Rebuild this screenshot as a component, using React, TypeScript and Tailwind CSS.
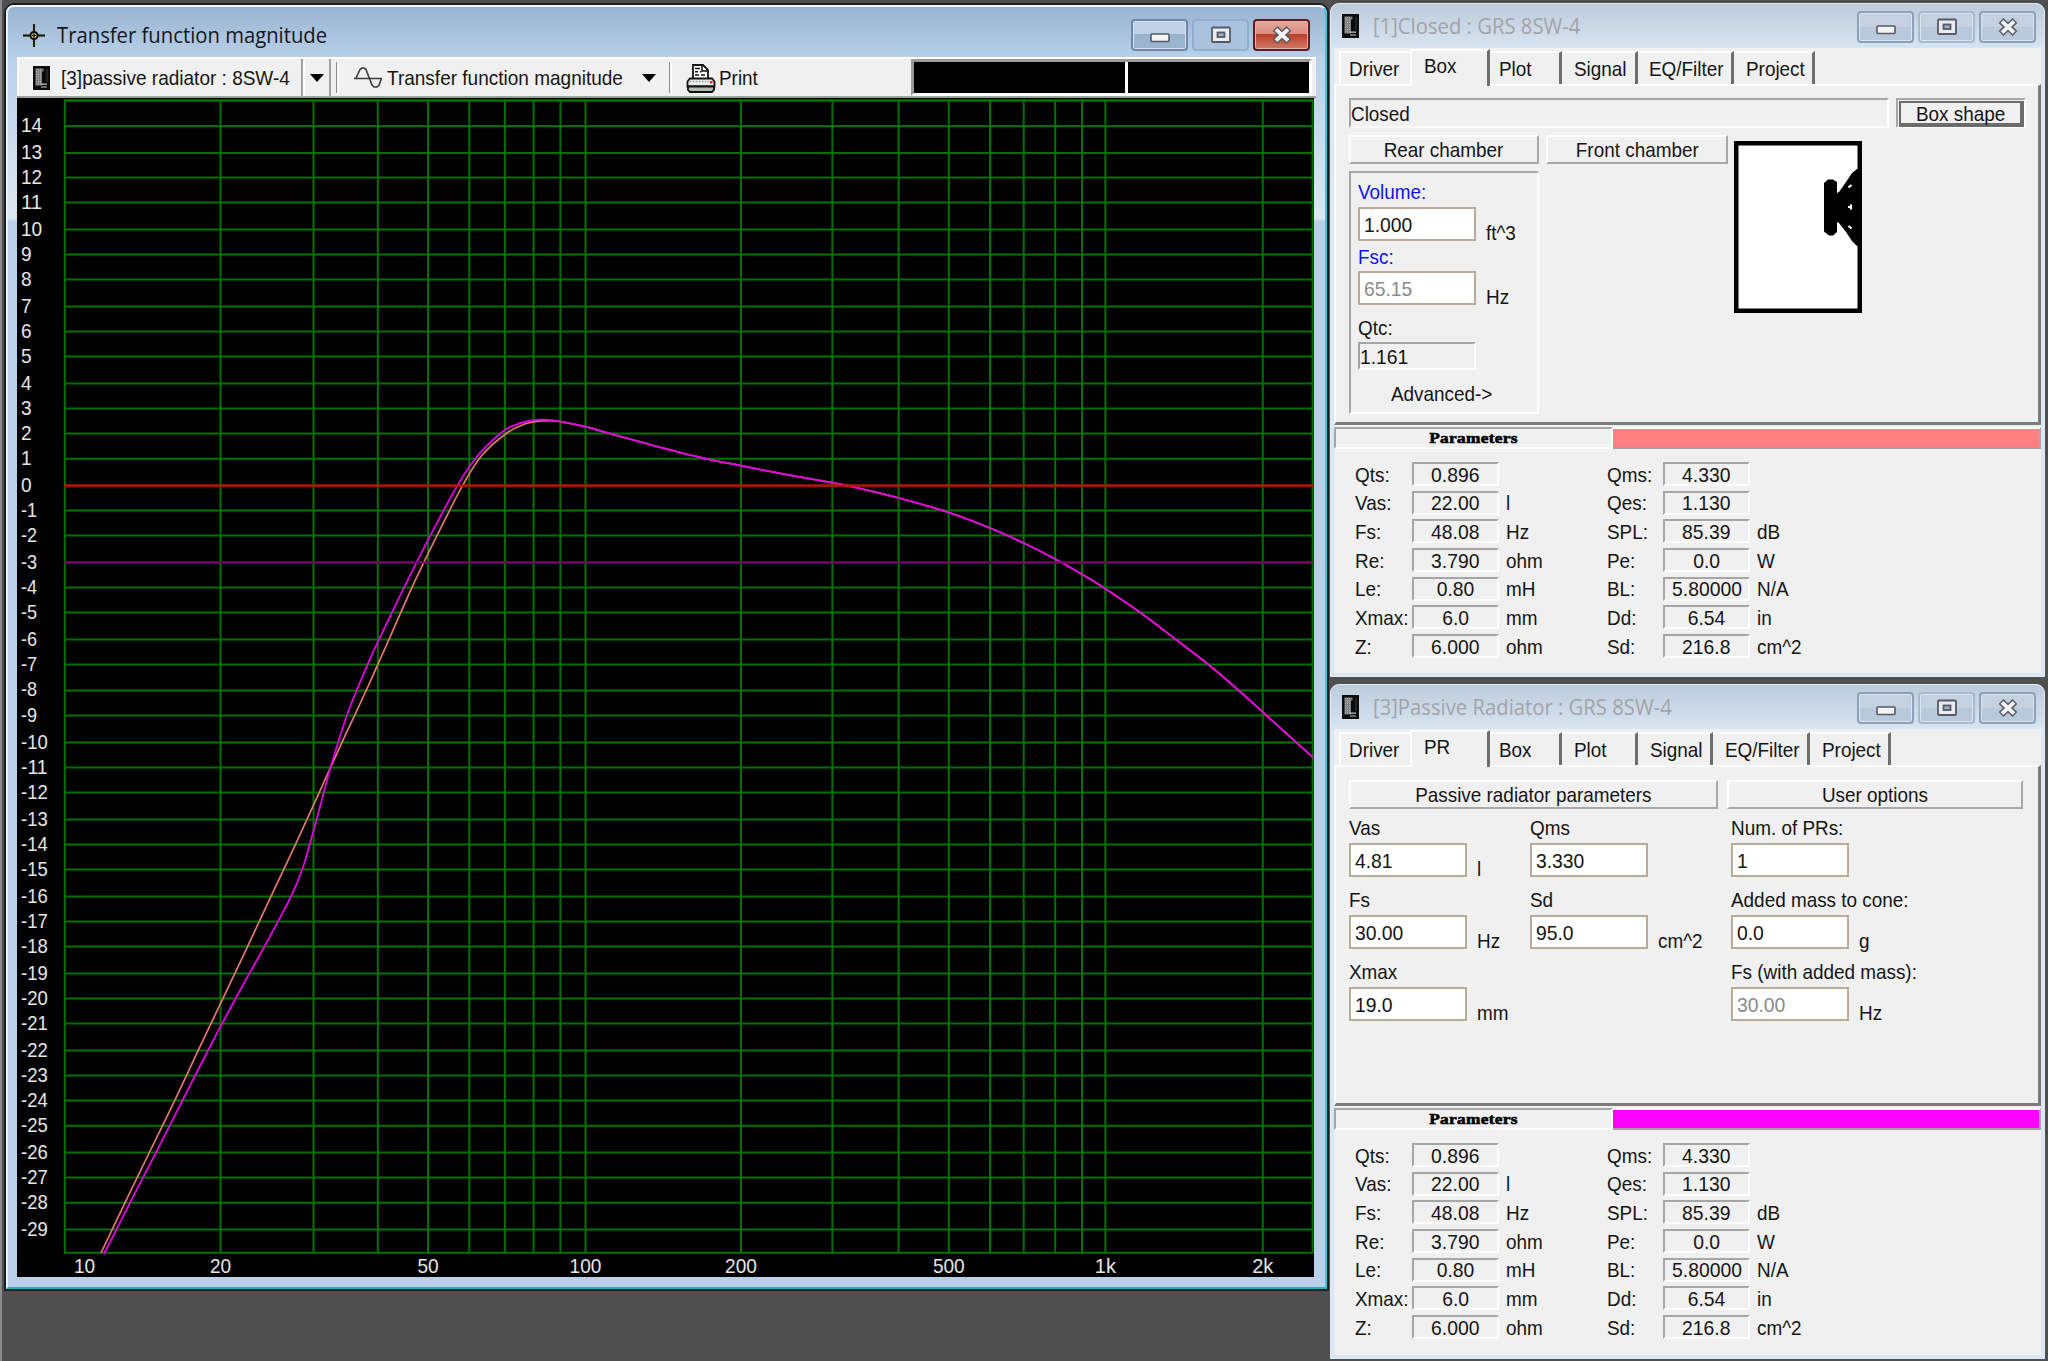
import type { ReactNode } from "react";
import { clsx } from "clsx";
import { twMerge } from "tailwind-merge";

type Param = { label: string; value: string; unit?: string };
type Tab = { label: string; className: string };
type Point = [number, number];

const DB_LINES: Point[] = [
  [14, 126], [13, 153], [12, 177.5], [11, 202.5], [10, 229.5], [9, 254.5], [8, 279.5], [7, 306.5],
  [6, 331.5], [5, 356.5], [4, 383.5], [3, 408.5], [2, 433.5], [1, 458.8], [0, 485.6], [-1, 510.5],
  [-2, 535.6], [-3, 562.6], [-4, 587.6], [-5, 612.6], [-6, 639.5], [-7, 664.5], [-8, 690.4],
  [-9, 715.5], [-10, 742.5], [-11, 767.5], [-12, 792.5], [-13, 819.5], [-14, 844.5], [-15, 869.5],
  [-16, 896.5], [-17, 921.5], [-18, 946.5], [-19, 973.5], [-20, 998.5], [-21, 1023.5], [-22, 1050.5],
  [-23, 1075.5], [-24, 1100.5], [-25, 1125.7], [-26, 1152.5], [-27, 1177.5], [-28, 1202.7], [-29, 1229.5],
];

const FREQ_LINES = [
  64.8, 220.5, 313.5, 377.8, 428, 469.3, 504.9, 533.5, 560.4, 585.5, 741, 832.4, 898.6, 948.8, 990,
  1023.7, 1055.2, 1082, 1105.4, 1262.7, 1312.6,
];

const FREQ_LABELS: [string, number][] = [
  ["10", 84.5], ["20", 220.5], ["50", 428], ["100", 585.5], ["200", 741], ["500", 948.8],
  ["1k", 1105.4], ["2k", 1262.8],
];

// both responses merge above ~90 Hz
const TAIL: Point[] = [
  [559.4, 421.3], [585.4, 426.7], [607, 432.7], [628.8, 438.7], [660, 447.3], [704, 458.3],
  [740, 465.5], [786, 474.5], [832, 482.7], [857.8, 488], [897.8, 497.7], [948.3, 512.3], [990, 528],
  [1023.6, 543], [1055.2, 559], [1082, 574.3], [1105.3, 588.7], [1140.6, 612.7], [1175.6, 639.3],
  [1209, 665], [1239, 690.7], [1266, 715], [1295.5, 741.7], [1313, 757.3],
];
const CLOSED: Point[] = [
  [101, 1253], [125, 1202.7], [149.6, 1152], [174.8, 1100.3], [198.7, 1049.3], [223.3, 997.7],
  [247.2, 947.3], [271.7, 894.8], [296, 843.3], [319.3, 792.3], [342.3, 741.7], [366.4, 690],
  [389, 639.3], [412, 587.3], [437, 535.7], [462.5, 485.7], [481.4, 456], [505.6, 434], [524.7, 424],
  [542, 420.8],
];
const PASSIVE: Point[] = [
  [104, 1254], [130, 1202.7], [156.3, 1152], [182.5, 1100.3], [208.5, 1049.5], [236, 997.7],
  [264.3, 946.7], [278.7, 920], [291.7, 895], [302.3, 869.3], [309.7, 844.3], [317.3, 816.7],
  [324, 791.7], [330.7, 766.7], [338.3, 741.7], [347, 715], [356.7, 690], [367.7, 664.3],
  [379, 639.3], [404.2, 587.3], [430.2, 535.7], [457.3, 485.7], [477, 456.5], [502, 432], [516, 424.6],
  [529, 421], [545, 419.7],
];

const LEFT_PARAMS: Param[] = [
  { label: "Qts:", value: "0.896" },
  { label: "Vas:", value: "22.00", unit: "l" },
  { label: "Fs:", value: "48.08", unit: "Hz" },
  { label: "Re:", value: "3.790", unit: "ohm" },
  { label: "Le:", value: "0.80", unit: "mH" },
  { label: "Xmax:", value: "6.0", unit: "mm" },
  { label: "Z:", value: "6.000", unit: "ohm" },
];
const RIGHT_PARAMS: Param[] = [
  { label: "Qms:", value: "4.330" },
  { label: "Qes:", value: "1.130" },
  { label: "SPL:", value: "85.39", unit: "dB" },
  { label: "Pe:", value: "0.0", unit: "W" },
  { label: "BL:", value: "5.80000", unit: "N/A" },
  { label: "Dd:", value: "6.54", unit: "in" },
  { label: "Sd:", value: "216.8", unit: "cm^2" },
];

const CLOSED_TABS: Tab[] = [
  { label: "Plot", className: "w-[72px] pl-[9px]" },
  { label: "Signal", className: "w-[76px] pl-[12px]" },
  { label: "EQ/Filter", className: "w-[96px] pl-[11px]" },
  { label: "Project", className: "w-[81px] pl-[12px]" },
];
const PASSIVE_TABS: Tab[] = [
  { label: "Box", className: "w-[72px] pl-[9px]" },
  { label: "Plot", className: "w-[76px] pl-[12px]" },
  { label: "Signal", className: "w-[75px] pl-[12px]" },
  { label: "EQ/Filter", className: "w-[97px] pl-[12px]" },
  { label: "Project", className: "w-[81px] pl-[12px]" },
];

const sunken = "border-2 border-t-[#a6a6a6] border-l-[#a6a6a6] border-r-[#fcfcfc] border-b-[#fcfcfc]";
const raised = "border-2 border-t-[#fcfcfc] border-l-[#fcfcfc] border-r-[#a8a8a8] border-b-[#a8a8a8]";

function smoothPath(points: Point[]) {
  let d = `M${points[0][0]} ${points[0][1]}`;
  for (let i = 0; i < points.length - 1; i++) {
    const p0 = points[i - 1] ?? points[i];
    const p1 = points[i];
    const p2 = points[i + 1];
    const p3 = points[i + 2] ?? p2;
    d += `C${p1[0] + (p2[0] - p0[0]) / 6} ${p1[1] + (p2[1] - p0[1]) / 6} ${p2[0] - (p3[0] - p1[0]) / 6} ${p2[1] - (p3[1] - p1[1]) / 6} ${p2[0]} ${p2[1]}`;
  }
  return d;
}

function Txt({ children, className }: { children: ReactNode; className?: string }) {
  return (
    <span className={twMerge("inline-block origin-left scale-x-[0.9] text-[21px] leading-none whitespace-nowrap", className)}>
      {children}
    </span>
  );
}

function SpeakerIcon() {
  return (
    <svg width="17" height="24" viewBox="0 0 17 24" className="shrink-0">
      <rect width="17" height="24" fill="#0c0c0c" />
      <path d="M2.500 2.500h8v3H9v14H2.500z" fill="#7d7d7d" />
      <path d="M3.500 3v16M5.500 3v16M7.500 3v16" stroke="#bdbdbd" strokeWidth="0.9" strokeDasharray="1.2 1.2" />
      <path d="M8 18.2h6M8 21h6" stroke="#c4c4c4" strokeWidth="1.2" />
      <path d="M14 3v13" stroke="#3c3c3c" strokeWidth="1" />
    </svg>
  );
}

function CrosshairIcon() {
  return (
    <svg width="22" height="23" viewBox="0 0 22 23" className="shrink-0">
      <path d="M11 0v23M0 11.500h22" stroke="#a8a445" strokeWidth="3.600" opacity="0.350" />
      <path d="M11 0v23M0 11.500h22" stroke="#111" strokeWidth="1.800" />
      <circle cx="11" cy="11.500" r="3.600" fill="#b9b460" stroke="#111" strokeWidth="2" />
      <path d="M11 9.500v4M9 11.500h4" stroke="#111" strokeWidth="1.200" />
    </svg>
  );
}

function PrinterIcon() {
  return (
    <svg width="30" height="30" viewBox="0 0 30 30" className="shrink-0">
      <path d="M7 15V2h10l5 5v8" fill="#fff" stroke="#111" strokeWidth="1.8" />
      <path d="M16 2v6h6" fill="none" stroke="#111" strokeWidth="1.5" />
      <path d="M9 5.5h5M9 8.7h3M14 8.7h1.5M9 12h4M15 12h4" stroke="#111" strokeWidth="1.6" />
      <path d="M4 15.5h22l2.5 3v5H1.5v-5z" fill="#e8e8e8" stroke="#111" strokeWidth="1.8" />
      <path d="M4 18.5h19" stroke="#8f8f8f" strokeWidth="1.2" strokeDasharray="1.5 1.5" />
      <rect x="24" y="18" width="2.5" height="2.5" fill="#ff2020" />
      <path d="M2 23.5h26v3.5l-2 2H4l-2-2z" fill="#b5bab5" stroke="#111" strokeWidth="1.8" />
    </svg>
  );
}

function WaveIcon() {
  return (
    <svg width="30" height="22" viewBox="0 0 30 22" className="shrink-0">
      <path
        d="M0 11.5h28M2 11 6 2.5 8 1h2l2 1.5L18 18l2 2h3l2-2 2.5-6.5"
        fill="none"
        stroke="#3c3c3c"
        strokeWidth="1.6"
      />
    </svg>
  );
}

function DownArrow() {
  return (
    <svg width="14" height="8" viewBox="0 0 14 8">
      <path d="M0 0h14L7 8z" fill="#000" />
    </svg>
  );
}

function CaptionGlyph({ kind }: { kind: "min" | "max" | "close" }) {
  return (
    <svg width="24" height="24" viewBox="0 0 24 24">
      {kind === "min" && (
        <rect x="3" y="11" width="18" height="7.5" rx="1" fill="#f4f4f4" stroke="#555a66" strokeWidth="1.6" />
      )}
      {kind === "max" && (
        <>
          <rect x="3" y="4.5" width="18" height="14.5" rx="1" fill="#e9ebee" stroke="#555a66" strokeWidth="1.8" />
          <rect x="8.5" y="9.5" width="7" height="4.5" fill="#9fb3cc" stroke="#555a66" strokeWidth="1.8" />
        </>
      )}
      {kind === "close" && (
        <>
          <path d="M5 5.5 19 18.5M19 5.5 5 18.5" stroke="#555a66" strokeWidth="7" />
          <path d="M6 6.4 18 17.6M18 6.4 6 17.6" stroke="#f2f2f2" strokeWidth="4" />
        </>
      )}
    </svg>
  );
}

function CaptionButtons({ active }: { active?: boolean }) {
  const base = "flex items-center justify-center rounded-[4px] border-2";
  const idle = "border-[#8f9fb9] bg-linear-to-b from-[#c3d1e1] from-50% to-[#b8c9dc] to-50% shadow-[inset_0_0_0_1px_#dbe5f0]";
  if (!active) {
    return (
      <div className="ml-auto flex h-[32px] gap-[4px]">
        <button className={clsx(base, idle, "w-[57px]")}><CaptionGlyph kind="min" /></button>
        <button className={twMerge(base, idle, "w-[57px] border-[#a9bacf]")}><CaptionGlyph kind="max" /></button>
        <button className={clsx(base, idle, "w-[57px]")}><CaptionGlyph kind="close" /></button>
      </div>
    );
  }
  return (
    <div className="ml-auto flex h-[32px] gap-[4px]">
      <button className={clsx(base, "w-[57px] border-[#6f87ab] bg-linear-to-b from-[#bfd1e6] from-45% to-[#9bb5d1] to-45% shadow-[inset_0_0_0_1px_#d6e3f1]")}>
        <CaptionGlyph kind="min" />
      </button>
      <button className={clsx(base, "w-[57px] border-[#93add0] bg-[#a9c2de]")}>
        <CaptionGlyph kind="max" />
      </button>
      <button className={clsx(base, "w-[57px] border-[#5b1d28] bg-[linear-gradient(#e7a79b,#dc8f82_45%,#b93f28_47%,#d07a68)] shadow-[inset_0_0_0_1px_#eab0a6]")}>
        <CaptionGlyph kind="close" />
      </button>
    </div>
  );
}

function Plot() {
  return (
    <svg
      width="1297"
      height="1179"
      viewBox="17 98 1297 1179"
      className="block bg-black"
      fontFamily="Liberation Sans, Arial, sans-serif"
      fontSize="21"
    >
      <g stroke="#007200" strokeWidth="2">
        {FREQ_LINES.map((x) => <line key={x} x1={x} x2={x} y1="100" y2="1253" />)}
        {DB_LINES.map(([db, y]) => <line key={db} x1="64" x2="1313.5" y1={y} y2={y} />)}
        <line x1="64" x2="1313.5" y1="100.5" y2="100.5" strokeWidth="2.4" />
        <line x1="64" x2="1313.5" y1="1252.7" y2="1252.7" />
      </g>
      <path d={smoothPath([...CLOSED, ...TAIL])} fill="none" stroke="#e07870" strokeWidth="1.7" />
      <path d={smoothPath([...PASSIVE, ...TAIL])} fill="none" stroke="#e000e0" strokeWidth="1.8" />
      <line x1="64" x2="1313.5" y1="562.6" y2="562.6" stroke="#740074" strokeWidth="2" />
      <line x1="64" x2="1313.5" y1="485.6" y2="485.6" stroke="#d80000" strokeWidth="2.2" />
      <g fill="#e6e6e6">
        {DB_LINES.map(([db, y]) => {
          const digits = String(Math.abs(db)).length;
          return (
            <text
              key={db}
              x="21"
              y={y + 6}
              textLength={digits * 10.6 + (db < 0 ? 5.5 : 0)}
              lengthAdjust="spacingAndGlyphs"
            >
              {db}
            </text>
          );
        })}
        {FREQ_LABELS.map(([label, x]) => (
          <text
            key={label}
            x={x}
            y="1273"
            textAnchor="middle"
            textLength={label.length * 10.6}
            lengthAdjust="spacingAndGlyphs"
          >
            {label}
          </text>
        ))}
      </g>
    </svg>
  );
}

function PlotWindow() {
  return (
    <div className="absolute top-[3px] left-[4px] flex h-[1288px] w-[1325px] flex-col rounded-t-[10px] border-2 border-[#1c1f22] bg-[#b9d1ea]">
      <div className="flex min-h-0 flex-1 flex-col rounded-t-[8px] border-2 border-t-[#f4f8fc] border-r-[#3fc4de] border-b-[#1fb0c2] border-l-[#e8f1fa] bg-[linear-gradient(#99b4d1,#b9d1ea_52px,#dbe7f4_211px,#bad0ea_215px)] px-[9px]">
        <div className="flex h-[50px] shrink-0 items-start pt-[12px] pr-[6px]">
          <div className="mt-[5px] ml-[6px] flex items-center gap-[12px]">
            <CrosshairIcon />
            <Txt className="scale-x-[0.965] font-['Open_Sans',sans-serif] text-[#16181d]">
              Transfer function magnitude
            </Txt>
          </div>
          <CaptionButtons active />
        </div>
        <div className="flex h-[41px] shrink-0 items-stretch border-t-2 border-b-2 border-t-white border-b-[#a0a0a0] bg-[#f0f0f0]">
          <div className="flex w-[286px] shrink-0 items-center gap-[11px] border-r-2 border-l-2 border-r-[#a0a0a0] border-l-white pl-[14px]">
            <SpeakerIcon />
            <Txt className="scale-x-[0.905]">[3]passive radiator : 8SW-4</Txt>
          </div>
          <div className="flex w-[28px] shrink-0 items-center justify-center border-r-2 border-l-2 border-r-[#a0a0a0] border-l-white">
            <DownArrow />
          </div>
          <div className="my-[3px] ml-[5px] w-[3px] shrink-0 border-r border-l border-r-white border-l-[#8e8e8e]" />
          <div className="ml-[15px] flex w-[319px] shrink-0 items-center gap-[3px]">
            <WaveIcon />
            <div className="w-[252px] shrink-0 pt-[3px]"><Txt className="scale-x-[0.905]">Transfer function magnitude</Txt></div>
            <DownArrow />
          </div>
          <div className="my-[3px] ml-[-4px] w-[3px] shrink-0 border-r border-l border-r-white border-l-[#8e8e8e]" />
          <div className="ml-[14px] flex items-center gap-[3px]">
            <PrinterIcon />
            <Txt>Print</Txt>
          </div>
          <div className="mr-[4px] ml-auto flex w-[401px] gap-[3px] border-[3px] border-t-[#9a9a9a] border-r-white border-b-white border-l-[#9a9a9a] bg-white">
            <div className="w-[211px] bg-black" />
            <div className="flex-1 bg-black" />
          </div>
        </div>
        <Plot />
      </div>
    </div>
  );
}

function TabStrip({ active, tabs }: { active: string; tabs: Tab[] }) {
  return (
    <div className="flex h-[36px] shrink-0 items-end pl-[5px]">
      <div className="flex h-[33px] w-[71px] items-center border-t-2 border-l-2 border-[#fcfcfc] pl-[8px]">
        <Txt>Driver</Txt>
      </div>
      <div className="relative z-10 -mb-[2px] flex h-[37px] w-[80px] items-start border-t-2 border-r-[3px] border-l-2 border-t-[#fcfcfc] border-r-[#6e6e6e] border-l-[#fcfcfc] bg-[#f0f0f0] pt-[4px] pl-[12px]">
        <Txt>{active}</Txt>
      </div>
      {tabs.map((tab) => (
        <div
          key={tab.label}
          className={clsx("flex h-[33px] items-center border-t-2 border-r-[3px] border-t-[#fcfcfc] border-r-[#6e6e6e]", tab.className)}
        >
          <Txt>{tab.label}</Txt>
        </div>
      ))}
    </div>
  );
}

function ParamCells({ rows, className }: { rows: Param[]; className: string }) {
  return (
    <div className={clsx("grid auto-rows-[28.7px]", className)}>
      {rows.map((row) => (
        <div key={row.label} className="col-span-3 grid grid-cols-subgrid">
          <div className="flex h-[24px] items-center"><Txt>{row.label}</Txt></div>
          <div className={clsx("mr-[7px] flex h-[24px] items-center justify-center", sunken)}>
            <Txt className="origin-center scale-x-[0.92]">{row.value}</Txt>
          </div>
          <div className="flex h-[24px] items-center"><Txt>{row.unit}</Txt></div>
        </div>
      ))}
    </div>
  );
}

function Parameters({ color }: { color: string }) {
  return (
    <>
      <div className="mt-[2px] flex h-[22px] shrink-0">
        <div className={clsx("flex w-[279px] items-center justify-center", sunken)}>
          <Txt className="origin-center scale-x-[1.15] font-['Liberation_Serif',serif] text-[15px] font-bold tracking-[0.3px] text-black [-webkit-text-stroke:0.6px_black]">
            Parameters
          </Txt>
        </div>
        <div className={clsx("flex-1 border-t-2 border-r-2 border-b-2 border-t-white border-r-[#b0a8a8] border-b-[#a8a0a0]", color)} />
      </div>
      <div className="flex pt-[13px] pl-[21px]">
        <ParamCells rows={LEFT_PARAMS} className="grid-cols-[57px_94px_101px]" />
        <ParamCells rows={RIGHT_PARAMS} className="grid-cols-[56px_94px_101px]" />
      </div>
    </>
  );
}

function Input({ value, disabled }: { value: string; disabled?: boolean }) {
  return (
    <div className="flex h-[34px] w-[118px] shrink-0 items-center border-2 border-[#b8ac98] bg-white pl-[4px]">
      <Txt className={clsx("scale-x-[0.92]", disabled && "text-[#8a8a8a]")}>{value}</Txt>
    </div>
  );
}

function Field({ label, value, unit, disabled }: { label: string; value: string; unit?: string; disabled?: boolean }) {
  return (
    <div className="flex h-[72px] flex-col">
      <div className="flex h-[24px] items-center"><Txt>{label}</Txt></div>
      <div className="mt-[4px] flex">
        <Input value={value} disabled={disabled} />
        <Txt className="mt-[15px] ml-[10px]">{unit}</Txt>
      </div>
    </div>
  );
}

function Heading({ children, className }: { children: ReactNode; className: string }) {
  return (
    <div className={clsx("flex h-[29px] shrink-0 items-center justify-center", raised, className)}>
      <Txt className="origin-center">{children}</Txt>
    </div>
  );
}

function BoxDrawing() {
  return (
    <svg width="128" height="172" viewBox="0 0 128 172" className="mt-[6px] shrink-0">
      <rect x="2.25" y="2.25" width="123.5" height="167.5" fill="#fff" stroke="#000" strokeWidth="4.5" />
      <path d="M90 42l4-3.500h5l4 2.500v11l2-1 7-10 6-9 5-4h4v77h-4l-5-5-6-9-7-9-2-1v10l-4 3.500h-4l-5-4z" fill="#000" />
      <path d="M114.500 46.500l3-2.500M114 66h4M117 63.500v5M114.500 85l3 2.500" stroke="#fff" strokeWidth="2.200" />
    </svg>
  );
}

function DriverWindow({ title, className, children }: { title: string; className: string; children: ReactNode }) {
  return (
    <div
      className={clsx(
        "absolute left-[1330px] flex w-[715px] flex-col rounded-t-[9px] border border-[#e4edf6] bg-[#d7e4f2] bg-linear-to-b from-[#bccbda] to-[#d9e6f4] to-[46px] px-[3px] pb-[3px]",
        className,
      )}
    >
      <div className="flex h-[44px] shrink-0 items-start pt-[7px] pr-[5px]">
        <div className="mt-[3px] ml-[8px] flex items-center gap-[14px]">
          <SpeakerIcon />
          <Txt className="scale-x-[0.965] font-['Open_Sans',sans-serif] text-[#a3a3a8]">{title}</Txt>
        </div>
        <CaptionButtons />
      </div>
      <div className="flex min-h-0 flex-1 flex-col bg-[#f0f0f0]">{children}</div>
    </div>
  );
}

const page = "flex shrink-0 border-t-2 border-r-[3px] border-b-[3px] border-l-2 border-t-[#fcfcfc] border-r-[#7c7c7c] border-b-[#7c7c7c] border-l-[#fcfcfc] pl-[13px]";

function ClosedWindow() {
  return (
    <DriverWindow title="[1]Closed : GRS 8SW-4" className="top-[3px] h-[674px]">
      <TabStrip active="Box" tabs={CLOSED_TABS} />
      <div className={clsx(page, "h-[341px] flex-col pt-[12px]")}>
        <div className="flex h-[30px] gap-[7px]">
          <div className={clsx("flex w-[540px] items-center", sunken)}><Txt>Closed</Txt></div>
          <div className={clsx("w-[130px] pt-px pl-px", sunken)}>
            <div className="flex h-[26px] items-center justify-center border-2 border-r-[4px] border-b-[4px] border-[#6c6c6c]">
              <Txt className="origin-center">Box shape</Txt>
            </div>
          </div>
        </div>
        <div className="mt-[7px] flex items-start">
          <div className="flex flex-col">
            <Heading className="w-[190px]">Rear chamber</Heading>
            <div className={clsx("mt-[7px] flex h-[243px] w-[190px] flex-col pt-[6px] pl-[7px]", sunken)}>
              <div className="flex h-[24px] items-center text-[#1010f0]"><Txt>Volume:</Txt></div>
              <div className="mt-[4px] flex">
                <Input value="1.000" />
                <Txt className="mt-[15px] ml-[10px]">ft^3</Txt>
              </div>
              <div className="mt-[2px] flex h-[22px] items-center text-[#1010f0]"><Txt>Fsc:</Txt></div>
              <div className="mt-[4px] flex">
                <Input value="65.15" disabled />
                <Txt className="mt-[15px] ml-[10px]">Hz</Txt>
              </div>
              <div className="mt-[9px] flex h-[22px] items-center"><Txt>Qtc:</Txt></div>
              <div className={clsx("mt-[4px] flex h-[28px] w-[118px] shrink-0 items-center", sunken)}>
                <Txt className="scale-x-[0.92]">1.161</Txt>
              </div>
              <div className="mt-[13px] ml-[33px]"><Txt>Advanced-&gt;</Txt></div>
            </div>
          </div>
          <Heading className="ml-[7px] w-[182px]">Front chamber</Heading>
          <div className="ml-[6px]"><BoxDrawing /></div>
        </div>
      </div>
      <Parameters color="bg-[#ff8080]" />
    </DriverWindow>
  );
}

function PassiveWindow() {
  return (
    <DriverWindow title="[3]Passive Radiator : GRS 8SW-4" className="top-[684px] h-[675px]">
      <TabStrip active="PR" tabs={PASSIVE_TABS} />
      <div className={clsx(page, "h-[341px] flex-col pt-[13px]")}>
        <div className="flex gap-[9px]">
          <Heading className="w-[369px]">Passive radiator parameters</Heading>
          <Heading className="w-[296px]">User options</Heading>
        </div>
        <div className="mt-[6px] grid grid-cols-[181px_201px_300px]">
          <Field label="Vas" value="4.81" unit="l" />
          <Field label="Qms" value="3.330" />
          <Field label="Num. of PRs:" value="1" />
          <Field label="Fs" value="30.00" unit="Hz" />
          <Field label="Sd" value="95.0" unit="cm^2" />
          <Field label="Added mass to cone:" value="0.0" unit="g" />
          <Field label="Xmax" value="19.0" unit="mm" />
          <div />
          <Field label="Fs (with added mass):" value="30.00" unit="Hz" disabled />
        </div>
      </div>
      <Parameters color="bg-[#ff00ff]" />
    </DriverWindow>
  );
}

export default function App() {
  return (
    <div className="relative h-[1361px] w-[2048px] overflow-hidden border-l-2 border-[#8a8a8a] bg-[#4f4f4f] font-['Liberation_Sans',Arial,sans-serif] text-[#151515]">
      <div className="absolute inset-0 -left-[2px]">
        <PlotWindow />
        <ClosedWindow />
        <PassiveWindow />
      </div>
    </div>
  );
}
